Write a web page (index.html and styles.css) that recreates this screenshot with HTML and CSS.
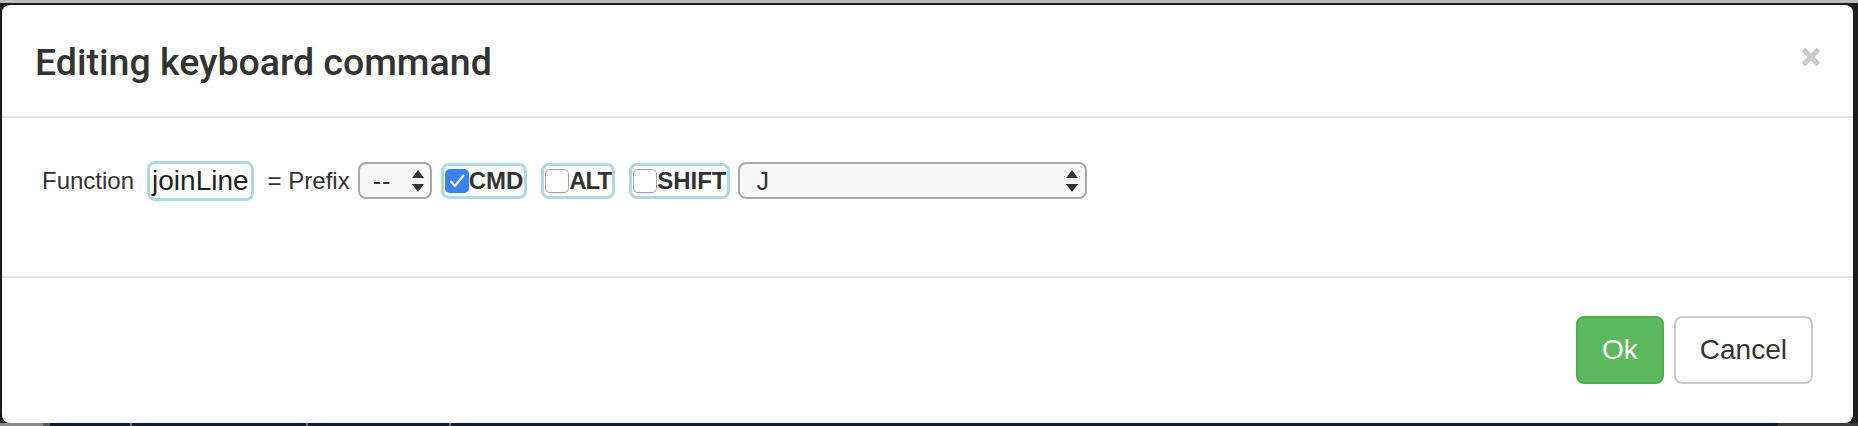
FILE: index.html
```html
<!DOCTYPE html>
<html>
<head>
<meta charset="utf-8">
<link rel="stylesheet" href="styles.css">
</head>
<body>
<div class="topbar"></div>
<div class="stage">
  <div class="modal">
    <div class="modal-header">
      <h4 class="modal-title">Editing keyboard command</h4>
      <span class="close" aria-label="Close">
        <svg width="20" height="18" viewBox="0 0 20 18"><path d="M2.5 1.5 L17.5 16.5 M17.5 1.5 L2.5 16.5" stroke="#cacaca" stroke-width="5" stroke-linecap="butt" fill="none"/></svg>
      </span>
    </div>
    <div class="modal-body">
      <span class="lbl">Function</span>
      <span class="fn-name">joinLine</span>
      <span class="lbl eq">= Prefix</span>
      <div class="sel sel-prefix">
        <span class="sel-text">--</span>
        <svg class="arrows" width="12" height="22" viewBox="0 0 12 22"><path d="M6 0 L12 8 L0 8 Z M0 14 L12 14 L6 22 Z" fill="#333"/></svg>
      </div>
      <label class="chk chk-cmd">
        <span class="box checked"><svg width="24" height="24" viewBox="0 0 24 24"><path d="M6 12.5 L10 17 L18.5 6.5" stroke="#fff" stroke-width="2" fill="none" stroke-linecap="round" stroke-linejoin="round"/></svg></span>
        <span class="chk-text">CMD</span>
      </label>
      <label class="chk chk-alt">
        <span class="box"></span>
        <span class="chk-text">ALT</span>
      </label>
      <label class="chk chk-shift">
        <span class="box"></span>
        <span class="chk-text">SHIFT</span>
      </label>
      <div class="sel sel-key">
        <span class="sel-text">J</span>
        <svg class="arrows" width="12" height="22" viewBox="0 0 12 22"><path d="M6 0 L12 8 L0 8 Z M0 14 L12 14 L6 22 Z" fill="#333"/></svg>
      </div>
    </div>
    <div class="modal-footer">
      <button class="btn btn-ok">Ok</button>
      <button class="btn btn-cancel">Cancel</button>
    </div>
  </div>
</div>
<div class="bottombar">
  <span class="seg seg-gray"></span>
  <span class="seg seg-mid"></span>
  <span class="seg seg-navy w1"></span>
  <span class="seg seg-sep"></span>
  <span class="seg seg-navy w2"></span>
  <span class="seg seg-sep"></span>
  <span class="seg seg-navy w3"></span>
  <span class="seg seg-sep"></span>
  <span class="seg seg-navy grow"></span>
  <span class="seg seg-end"></span>
</div>
</body>
</html>
```
FILE: styles.css
```css
* { box-sizing: border-box; }
html, body { margin: 0; padding: 0; }
body {
  width: 1858px;
  height: 426px;
  overflow: hidden;
  background: #1c1c1c;
  font-family: "Liberation Sans", Arial, Helvetica, sans-serif;
  color: #333;
  display: flex;
  flex-direction: column;
}
.topbar { height: 3px; background: #bcbcbc; flex: none; }
.stage {
  flex: none;
  height: 420px;
  padding: 2px 5px 0 2px;
}
.modal {
  width: 1851px;
  height: 418px;
  background: #fff;
  border-radius: 8px;
  display: flex;
  flex-direction: column;
  overflow: hidden;
}
.modal-header {
  height: 113px;
  padding: 35px 32px 0 33px;
  border-bottom: 2px solid #e5e5e5;
  display: flex;
  justify-content: space-between;
  align-items: flex-start;
}
.modal-title {
  margin: 0;
  font-family: Roboto, "Liberation Sans", Arial, sans-serif;
  font-size: 37.5px;
  line-height: 44px;
  font-weight: 500;
  color: #333;
}
.close { display: block; margin-top: 8px; line-height: 0; }
.modal-body {
  height: 158px;
  padding: 0 0 33px 40px;
  display: flex;
  align-items: center;
}
.lbl { font-size: 24px; color: #333; line-height: 30px; }
.fn-name {
  margin-left: 13px;
  height: 40px;
  padding: 0 2px;
  border: 3px solid #add8e6;
  border-radius: 8px;
  font-size: 28px;
  line-height: 34px;
  color: #222;
}
.eq { margin-left: 14px; }
.sel {
  height: 37px;
  border: 2px solid #a8a8a8;
  border-radius: 8px;
  background: #f7f7f7;
  display: flex;
  align-items: center;
  justify-content: space-between;
}
.sel-text { font-size: 25px; color: #333; line-height: 30px; }
.sel-prefix { margin-left: 8px; width: 74px; padding: 0 6px 0 13px; }
.sel-prefix .sel-text { letter-spacing: 1px; }
.sel-key { margin-left: 8px; width: 349px; padding: 0 7px 0 16px; }
.arrows { display: block; flex: none; }
.chk {
  display: flex;
  align-items: center;
  height: 36px;
  padding: 0 1px;
  border: 3px solid #add8e6;
  border-radius: 8px;
}
.chk-cmd { margin-left: 9px; }
.chk-alt { margin-left: 14px; }
.chk-alt .chk-text { letter-spacing: -1px; }
.chk-shift { margin-left: 14px; }
.box {
  width: 24px;
  height: 24px;
  border-radius: 5px;
  border: 1.5px solid #a5a5a5;
  background: #fff;
  box-shadow: 0 1px 1px rgba(0,0,0,0.08);
  flex: none;
  line-height: 0;
}
.box.checked {
  border: none;
  background: #3a82f6;
}
.chk-text {
  font-size: 24px;
  font-weight: 700;
  color: #333;
  line-height: 30px;
}
.modal-footer {
  height: 147px;
  border-top: 2px solid #e5e5e5;
  padding: 38px 40px 0 0;
  display: flex;
  justify-content: flex-end;
  align-items: flex-start;
}
.btn {
  height: 68px;
  padding: 0 24px;
  border-radius: 8px;
  font-family: "Liberation Sans", Arial, Helvetica, sans-serif;
  font-size: 28px;
  line-height: 64px;
  cursor: pointer;
}
.btn-ok {
  background: #5cb85c;
  border: 2px solid #4cae4c;
  color: #fff;
}
.btn-cancel {
  margin-left: 10px;
  background: #fff;
  border: 2px solid #ccc;
  color: #333;
}
.bottombar { flex: none; height: 3px; display: flex; }
.seg { display: block; height: 3px; }
.seg-gray { width: 43px; background: #8a8a8a; }
.seg-mid { width: 7px; background: #5a5a5a; }
.seg-navy { background: #0c1f34; }
.seg-sep { width: 2px; background: #6d6d6d; }
.w1 { width: 80px; }
.w2 { width: 174px; }
.w3 { width: 141px; }
.grow { flex: 1; }
.seg-end { width: 80px; background: #3a3a3a; }
```
